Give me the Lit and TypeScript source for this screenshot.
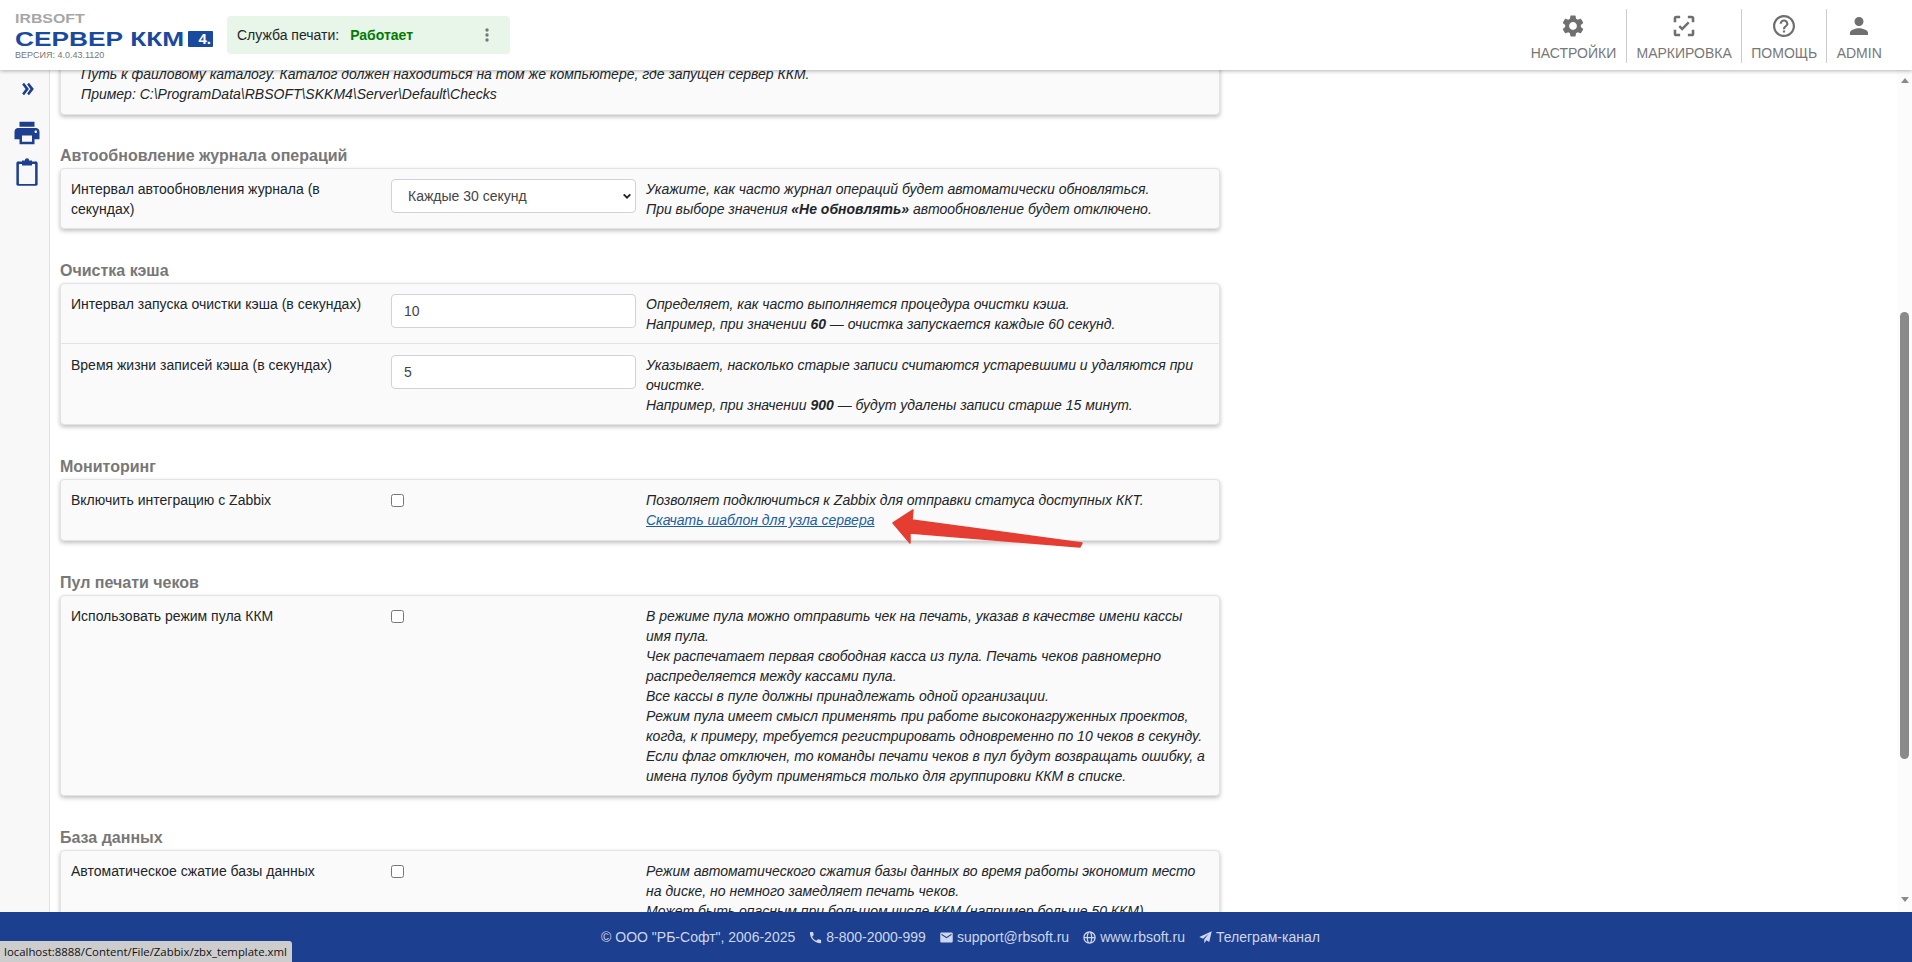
import { LitElement, html, css } from "lit";
import { customElement } from "lit/decorators.js";

const icon = (vb: string, d: string, cls = "") =>
  html`<svg class=${cls} viewBox=${vb} fill="currentColor"><path d=${d}></path></svg>`;

const GEAR = "M19.14 12.94c.04-.3.06-.61.06-.94 0-.32-.02-.64-.07-.94l2.03-1.58c.18-.14.23-.41.12-.61l-1.92-3.32c-.12-.22-.37-.29-.59-.22l-2.39.96c-.5-.38-1.03-.7-1.62-.94l-.36-2.54c-.04-.24-.24-.41-.48-.41h-3.84c-.24 0-.43.17-.47.41l-.36 2.54c-.59.24-1.13.57-1.62.94l-2.39-.96c-.22-.08-.47 0-.59.22L2.74 8.87c-.12.21-.08.47.12.61l2.03 1.58c-.05.3-.09.63-.09.94s.02.64.07.94l-2.03 1.58c-.18.14-.23.41-.12.61l1.92 3.32c.12.22.37.29.59.22l2.39-.96c.5.38 1.03.7 1.62.94l.36 2.54c.05.24.24.41.48.41h3.84c.24 0 .44-.17.47-.41l.36-2.54c.59-.24 1.13-.56 1.62-.94l2.39.96c.22.08.47 0 .59-.22l1.92-3.32c.12-.22.07-.47-.12-.61l-2.01-1.58zM12 15.6c-1.98 0-3.6-1.62-3.6-3.6s1.62-3.6 3.6-3.6 3.6 1.62 3.6 3.6-1.62 3.6-3.6 3.6z";
const PERSON = "M12 12c2.21 0 4-1.79 4-4s-1.79-4-4-4-4 1.79-4 4 1.79 4 4 4zm0 2c-2.67 0-8 1.34-8 4v2h16v-2c0-2.66-5.33-4-8-4z";
const HELP = "M11 18h2v-2h-2v2zm1-16C6.48 2 2 6.48 2 12s4.48 10 10 10 10-4.48 10-10S17.52 2 12 2zm0 18c-4.41 0-8-3.59-8-8s3.59-8 8-8 8 3.59 8 8-3.59 8-8 8zm0-14c-2.21 0-4 1.79-4 4h2c0-1.1.9-2 2-2s2 .9 2 2c0 2-3 1.75-3 5h2c0-2.25 3-2.5 3-5 0-2.21-1.79-4-4-4z";
const SCAN = "M4 9V6a2 2 0 0 1 2-2h3v2H6v3H4zm11-5h3a2 2 0 0 1 2 2v3h-2V6h-3V4zM4 15h2v3h3v2H6a2 2 0 0 1-2-2v-3zm14 0h2v3a2 2 0 0 1-2 2h-3v-2h3v-3zM10.6 15.6 7.7 12.7l1.3-1.3 1.6 1.6 4.4-4.4 1.3 1.3-5.7 5.7z";
const PRINT = "M19 8H5c-1.66 0-3 1.34-3 3v6h4v4h12v-4h4v-6c0-1.66-1.34-3-3-3zm-3 11H8v-5h8v5zm3-7c-.55 0-1-.45-1-1s.45-1 1-1 1 .45 1 1-.45 1-1 1zm-1-9H6v4h12V3z";
const CLIP = "M5.500 3.500H8V5.500H6a.5.5 0 0 0-.5.5v15a.5.5 0 0 0 .5.5h12a.5.5 0 0 0 .5-.5V6a.5.5 0 0 0-.5-.5h-2v-2h2.500A1.500 1.500 0 0 1 20.500 5v17a1.500 1.500 0 0 1-1.500 1H5a1.500 1.500 0 0 1-1.500-1V5a1.500 1.500 0 0 1 2-1.500zM8 2.700h2.300a1.700 1.700 0 0 1 3.400 0H16v4H8z";
const CHEV = "M5.3 3.2 8.4 0l8.1 10.5L8.4 21l-3.1-3.2 5.6-7.3zM13.5 3.2 16.6 0l8.1 10.5L16.6 21l-3.1-3.2 5.6-7.3z";
const PHONE = "M6.62 10.79c1.44 2.83 3.76 5.14 6.59 6.59l2.2-2.2c.27-.27.67-.36 1.02-.24 1.12.37 2.33.57 3.57.57.55 0 1 .45 1 1V20c0 .55-.45 1-1 1-9.39 0-17-7.61-17-17 0-.55.45-1 1-1h3.5c.55 0 1 .45 1 1 0 1.25.2 2.45.57 3.57.11.35.03.74-.25 1.02l-2.2 2.2z";
const MAIL = "M20 4H4c-1.1 0-2 .9-2 2v12c0 1.1.9 2 2 2h16c1.1 0 2-.9 2-2V6c0-1.1-.9-2-2-2zm0 4-8 5-8-5V6l8 5 8-5v2z";
const GLOBE = "M12 2a10 10 0 1 0 0 20 10 10 0 0 0 0-20zm7.900 9h-3.400a15 15 0 0 0-1.300-6.100A8 8 0 0 1 19.900 11zM12 4c.9 0 2.300 2.600 2.500 7h-5C9.700 6.600 11.100 4 12 4zM8.800 4.900A15 15 0 0 0 7.500 11H4.100a8 8 0 0 1 4.700-6.100zM4.100 13h3.400a15 15 0 0 0 1.300 6.100A8 8 0 0 1 4.100 13zM12 20c-.9 0-2.300-2.600-2.500-7h5c-.2 4.400-1.600 7-2.500 7zm3.200-.9a15 15 0 0 0 1.300-6.100h3.400a8 8 0 0 1-4.700 6.100z";
const PLANE = "M22 2 2 11l6 3 9-8-7 9v6l3.500-4.500L18 19z";

interface Row { label: string; control: unknown; desc: unknown; }

const sel = html`<div class="select"><span>Каждые 30 секунд</span><svg viewBox="0 0 12 12" fill="none" stroke="#222" stroke-width="2.200"><path d="M2 4l4 4 4-4"></path></svg></div>`;
const input = (v: string) => html`<div class="input">${v}</div>`;
const check = html`<div class="check"></div>`;

const sections: { title: string; rows: Row[] }[] = [
  {
    title: "Автообновление журнала операций",
    rows: [{
      label: "Интервал автообновления журнала (в секундах)",
      control: sel,
      desc: html`Укажите, как часто журнал операций будет автоматически обновляться.<br />При выборе значения <b>«Не обновлять»</b> автообновление будет отключено.`,
    }],
  },
  {
    title: "Очистка кэша",
    rows: [
      {
        label: "Интервал запуска очистки кэша (в секундах)",
        control: input("10"),
        desc: html`Определяет, как часто выполняется процедура очистки кэша.<br />Например, при значении <b>60</b> — очистка запускается каждые 60 секунд.`,
      },
      {
        label: "Время жизни записей кэша (в секундах)",
        control: input("5"),
        desc: html`Указывает, насколько старые записи считаются устаревшими и удаляются при очистке.<br />Например, при значении <b>900</b> — будут удалены записи старше 15 минут.`,
      },
    ],
  },
  {
    title: "Мониторинг",
    rows: [{
      label: "Включить интеграцию с Zabbix",
      control: check,
      desc: html`Позволяет подключиться к Zabbix для отправки статуса доступных ККТ.<br /><a>Скачать шаблон для узла сервера</a>`,
    }],
  },
  {
    title: "Пул печати чеков",
    rows: [{
      label: "Использовать режим пула ККМ",
      control: check,
      desc: html`В режиме пула можно отправить чек на печать, указав в качестве имени кассы имя пула.<br />Чек распечатает первая свободная касса из пула. Печать чеков равномерно распределяется между кассами пула.<br />Все кассы в пуле должны принадлежать одной организации.<br />Режим пула имеет смысл применять при работе высоконагруженных проектов, когда, к примеру, требуется регистрировать одновременно по 10 чеков в секунду.<br />Если флаг отключен, то команды печати чеков в пул будут возвращать ошибку, а имена пулов будут применяться только для группировки ККМ в списке.`,
    }],
  },
  {
    title: "База данных",
    rows: [{
      label: "Автоматическое сжатие базы данных",
      control: check,
      desc: html`Режим автоматического сжатия базы данных во время работы экономит место на диске, но немного замедляет печать чеков.<br />Может быть опасным при большом числе ККМ (например больше 50 ККМ).`,
    }],
  },
];

@customElement("app-root")
export class AppRoot extends LitElement {
  static styles = css`
    :host { display: flex; flex-direction: column; width: 1912px; height: 962px; overflow: hidden; position: relative; background: #fff; font-family: "Liberation Sans", Arial, sans-serif; font-size: 14px; line-height: 20px; color: #212529; }
    .header { height: 70px; flex: none; display: flex; align-items: center; background: #fff; box-shadow: 0 1px 4px rgba(0,0,0,.3); position: relative; z-index: 3; padding: 0 21px 0 15px; box-sizing: border-box; }
    .logo { width: 212px; flex: none; align-self: flex-start; padding-top: 12px; display: flex; flex-direction: column; overflow: hidden; }
    .rb { font-size: 12.500px; line-height: 14px; height: 14px; font-weight: 700; color: #a6a6a6; white-space: nowrap; transform: scaleX(1.27); transform-origin: left center; }
    .srv { display: flex; align-items: center; height: 20px; margin-top: 3px; color: #1a4a9e; font-weight: 700; }
    .srv .t { font-size: 21px; line-height: 20px; white-space: nowrap; transform: scaleX(1.25); transform-origin: left center; width: 173px; flex: none; }
    .srv .b { background: #1a4a9e; color: #fff; width: 25px; height: 16px; line-height: 16px; font-size: 15px; text-align: right; padding-right: 2px; box-sizing: border-box; flex: none; border-radius: 1px; margin-top: -1px; }
    .ver { font-size: 9px; line-height: 11px; color: #777; margin-top: 1px; }
    .status { width: 283px; height: 38px; background: #e8f5e9; border-radius: 4px; display: flex; align-items: center; padding: 0 10px; box-sizing: border-box; }
    .status .ok { color: #007b00; font-weight: 700; margin-left: 11px; flex: 1; }
    .status svg { width: 16px; height: 16px; color: #777; margin-right: 5px; }
    .nav { margin-left: auto; margin-top: 2px; display: flex; height: 54px; }
    .nav .it { display: flex; flex-direction: column; align-items: center; padding: 0 9.250px; border-left: 1px solid #ccc; color: #777; font-size: 14px; line-height: 20px; justify-content: flex-end; }
    .nav .it:first-child { border-left: none; padding-right: 10px; }
    .nav .it svg { width: 24px; height: 24px; margin-bottom: 5px; color: #6f6f6f; }
    .mid { flex: 1; min-height: 0; display: flex; }
    .side { width: 50px; flex: none; background: #f8f8f8; border-right: 1px solid #dee2e6; display: flex; flex-direction: column; align-items: center; color: #1c3f8f; padding: 12px 0 0 4px; box-sizing: border-box; }
    .side svg { display: block; }
    .side .ch { width: 15px; height: 14px; margin-bottom: 22px; margin-right: 1px; }
    .side .pr { width: 30px; height: 30px; margin-bottom: 9px; }
    .side .cl { width: 30px; height: 30px; margin-left: 1px; }
    .content { flex: 1; min-width: 0; overflow: hidden; padding: 0 0 0 10px; }
    .inner { width: 1160px; margin-top: -17px; }
    .sec { margin-bottom: 31px; }
    .sec:first-child { margin-bottom: 30px; }
    h3 { margin: 0 0 2px; padding-top: 1px; font-size: 16px; line-height: 20px; font-weight: 700; color: #777; }
    .card { background: #fafafa; border: 1px solid #e3e3e3; border-radius: 4px; box-shadow: 0 2px 4px rgba(0,0,0,.25); }
    .first { padding: 10px 20px; font-style: italic; }
    .row { display: grid; grid-template-columns: 320px 245px 1fr; padding: 10px 10px 9px; }
    .row + .row { border-top: 1px solid #e3e3e3; padding-top: 11px; }
    .lbl { padding-right: 15px; }
    .desc { margin-left: 10px; font-style: italic; }
    .desc a { display: inline-block; margin-bottom: 1px; color: #1a5ea8; text-decoration: underline; }
    .input, .select { height: 34px; box-sizing: border-box; border: 1px solid #ced4da; border-radius: 4px; background: #fff; padding: 0 16px; line-height: 32px; color: #444; position: relative; display: flex; align-items: center; justify-content: space-between; }
    .input { padding: 0 12px; }
    .select svg { width: 10px; height: 10px; position: absolute; right: 3px; top: 11px; }
    .check { width: 13px; height: 13px; box-sizing: border-box; border: 1px solid #767676; border-radius: 2.500px; background: #fff; margin-top: 4px; }
    .sb { width: 15px; flex: none; background: #fcfcfc; position: relative; display: flex; flex-direction: column; align-items: center; justify-content: space-between; padding: 8px 0 10px; box-sizing: border-box; }
    .tri { width: 0; height: 0; border-left: 4.500px solid transparent; border-right: 4.500px solid transparent; }
    .tri.u { border-bottom: 5px solid #8a8a8a; }
    .tri.d { border-top: 5px solid #8a8a8a; }
    .thumb { position: absolute; left: 3px; width: 9px; top: 242px; height: 447px; border-radius: 5px; background: #8a8a8a; }
    .footer { height: 50px; flex: none; background: #1c3f8f; color: #cdd6ee; display: flex; align-items: center; justify-content: center; gap: 13px; position: relative; z-index: 2; padding-left: 9px; box-sizing: border-box; }
    .footer span { display: inline-flex; align-items: center; gap: 3px; }
    .footer svg { width: 15px; height: 15px; }
    .tip { position: absolute; left: 0; bottom: 0; width: 292px; height: 21px; background: #cdcdcd; color: #111; font-family: "Open Sans", sans-serif; font-size: 11.400px; line-height: 21px; padding-left: 4px; box-sizing: border-box; border-top-right-radius: 3px; z-index: 4; white-space: nowrap; }
    .arrow { position: absolute; left: 880px; top: 500px; width: 220px; height: 60px; z-index: 1; }
  `;

  render() {
    return html`
      <div class="header">
        <div class="logo">
          <div class="rb">IRBSOFT</div>
          <div class="srv"><span class="t">СЕРВЕР ККМ</span><span class="b">4.</span></div>
          <div class="ver">ВЕРСИЯ: 4.0.43.1120</div>
        </div>
        <div class="status">
          <span>Служба печати:</span><span class="ok">Работает</span>
          <svg viewBox="0 0 16 16" fill="currentColor"><circle cx="8" cy="3" r="1.700"></circle><circle cx="8" cy="8" r="1.700"></circle><circle cx="8" cy="13" r="1.700"></circle></svg>
        </div>
        <div class="nav">
          <div class="it">${icon("1 1 22 22", GEAR)}НАСТРОЙКИ</div>
          <div class="it">${icon("2.700 2.700 18.600 18.600", SCAN)}МАРКИРОВКА</div>
          <div class="it">${icon("1.100 1.100 21.800 21.800", HELP)}ПОМОЩЬ</div>
          <div class="it">${icon("1.350 1.350 21.300 21.300", PERSON)}ADMIN</div>
        </div>
      </div>
      <div class="mid">
        <div class="side">
          ${icon("0 0 25 21", CHEV, "ch")}
          ${icon("0 0 24 24", PRINT, "pr")}
          ${icon("0 0 24 24", CLIP, "cl")}
        </div>
        <div class="content">
          <div class="inner">
            <div class="sec">
              <div class="card">
                <div class="first">Путь к файловому каталогу. Каталог должен находиться на том же компьютере, где запущен сервер ККМ.<br />Пример: C:\\ProgramData\\RBSOFT\\SKKM4\\Server\\Default\\Checks</div>
              </div>
            </div>
            ${sections.map((s) => html`
              <div class="sec">
                <h3>${s.title}</h3>
                <div class="card">
                  ${s.rows.map((r) => html`<div class="row"><div class="lbl">${r.label}</div><div>${r.control}</div><div class="desc">${r.desc}</div></div>`)}
                </div>
              </div>`)}
          </div>
        </div>
        <div class="sb"><div class="tri u"></div><div class="thumb"></div><div class="tri d"></div></div>
      </div>
      <div class="footer">
        <span>© ООО "РБ-Софт", 2006-2025</span>
        <span>${icon("0 0 24 24", PHONE)}8-800-2000-999</span>
        <span>${icon("0 0 24 24", MAIL)}support@rbsoft.ru</span>
        <span>${icon("0 0 24 24", GLOBE)}www.rbsoft.ru</span>
        <span>${icon("0 0 24 24", PLANE)}Телеграм-канал</span>
      </div>
      <div class="tip">localhost:8888/Content/File/Zabbix/zbx_template.xml</div>
      <svg class="arrow" viewBox="880 500 220 60"><path fill="#e53d31" stroke="#e53d31" stroke-width="1.500" stroke-linejoin="round" d="M893 523 913 510 912 520 1082 543 1080 547 910 533 910 543z"></path></svg>
    `;
  }
}
